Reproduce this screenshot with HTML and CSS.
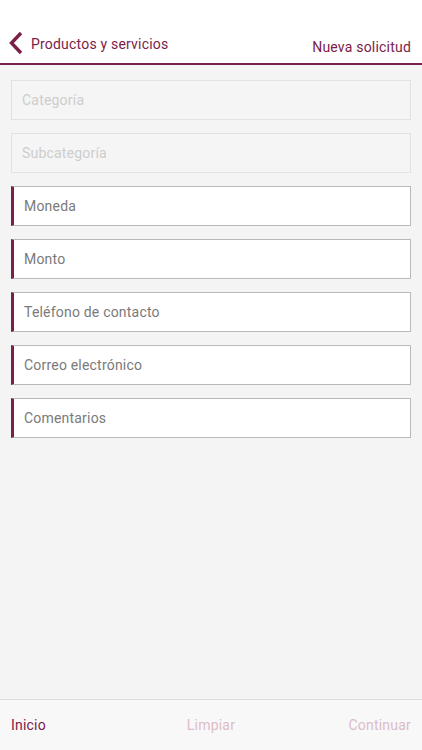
FILE: index.html
```html
<!DOCTYPE html>
<html lang="es">
<head>
<meta charset="utf-8">
<link rel="stylesheet" href="styles.css">
</head>
<body>
<div class="app">
  <header class="topbar">
    <div class="back">
      <svg class="chev" width="15" height="24" viewBox="0 0 15 24"><path d="M13 2 L3.5 12 L13 22" fill="none" stroke="#7b2149" stroke-width="3.4" stroke-linecap="butt" stroke-linejoin="miter"/></svg>
      <span>Productos y servicios</span>
    </div>
    <div class="title">Nueva solicitud</div>
  </header>
  <main class="form">
    <div class="field disabled">Categoría</div>
    <div class="field disabled">Subcategoría</div>
    <div class="field active">Moneda</div>
    <div class="field active">Monto</div>
    <div class="field active">Teléfono de contacto</div>
    <div class="field active">Correo electrónico</div>
    <div class="field active">Comentarios</div>
  </main>
  <footer class="bottombar">
    <span class="nav on left">Inicio</span>
    <span class="nav off mid">Limpiar</span>
    <span class="nav off right">Continuar</span>
  </footer>
</div>
</body>
</html>
```
FILE: styles.css
```css
html, body { margin: 0; padding: 0; }
body {
  font-family: Roboto, "Noto Sans", sans-serif;
  background: #f4f4f4;
}
.app {
  width: 422px;
  height: 750px;
  display: flex;
  flex-direction: column;
}
.topbar {
  height: 65px;
  box-sizing: border-box;
  background: #fff;
  border-bottom: 2px solid #7b2149;
  display: flex;
  align-items: flex-end;
  justify-content: space-between;
  padding: 0 11px 8px 8px;
  color: #7b2149;
  font-size: 14px;
  letter-spacing: 0.2px;
  flex: none;
}
.back { display: flex; align-items: center; gap: 8px; }
.chev { display: block; margin-top: -1px; }
.form {
  flex: 1;
  display: flex;
  flex-direction: column;
  gap: 13px;
  padding: 15px 11px 0 11px;
}
.field {
  height: 40px;
  box-sizing: border-box;
  display: flex;
  align-items: center;
  font-size: 14px;
  letter-spacing: 0.2px;
}
.field.disabled {
  background: #f5f5f5;
  border: 1px solid #e2e2e2;
  color: #cdcdcd;
  padding-left: 10px;
}
.field.active {
  background: #fff;
  border: 1px solid #b9b9b9;
  border-left: 3px solid #7b2149;
  color: #7a7a7a;
  padding-left: 10px;
}
.bottombar {
  height: 50px;
  flex: none;
  background: #f8f8f8;
  border-top: 1px solid #dcdcdc;
  display: grid;
  grid-template-columns: 1fr 1fr 1fr;
  align-items: center;
  padding: 0 11px;
  font-size: 14px;
  letter-spacing: 0.2px;
}
.left { justify-self: start; }
.mid { justify-self: center; }
.right { justify-self: end; }
.nav.on { color: #7b2149; }
.nav.off { color: #dcbcc8; }
```
